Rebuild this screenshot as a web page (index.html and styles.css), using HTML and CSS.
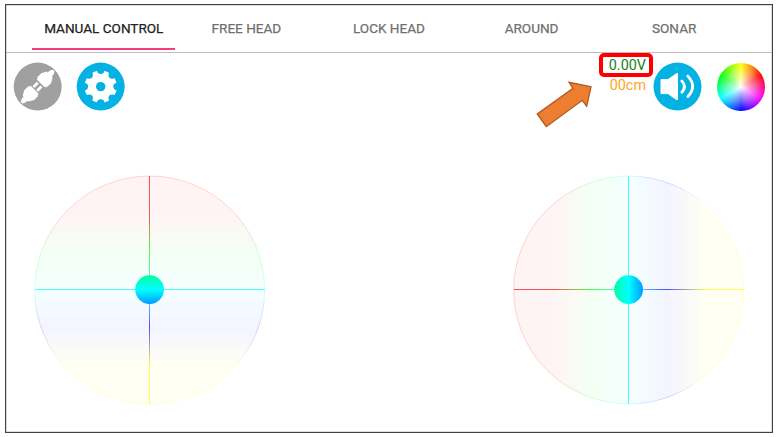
FILE: index.html
```html
<!DOCTYPE html>
<html lang="en">
<head>
<meta charset="utf-8">
<title>Robot control</title>
<link rel="stylesheet" href="styles.css">
</head>
<body>
<main class="screen">
  <nav class="tabs">
    <a class="tab active">MANUAL CONTROL</a>
    <a class="tab">FREE HEAD</a>
    <a class="tab">LOCK HEAD</a>
    <a class="tab">AROUND</a>
    <a class="tab">SONAR</a>
  </nav>
  <section class="toolbar">
    <div class="group">
      <svg class="icon" viewBox="0 0 48 48">
        <g transform="translate(-.3 -.4)">
        <circle cx="24" cy="24" r="24" fill="#9fa09f"/>
        <g transform="translate(24 24) rotate(-45)" fill="#fff">
          <path d="M4.4 -5.8H6V-7H12L17 -4.2V-3L20.5 -2.5L22.8 -1V1L20.5 2.5L17 3V4.2L12 7H6V5.8H4.4Z"/>
          <path d="M-4.4 -5.8H-6V-7H-12L-17 -4.2V-3L-20.5 -2.5L-22.8 -1V1L-20.5 2.5L-17 3V4.2L-12 7H-6V5.8H-4.4Z"/>
          <path d="M-3.3 -4H2.7V-1.2H-3.3ZM-3.3 1.2H2.7V4H-3.3Z"/>
        </g>
        </g>
      </svg>
      <svg class="icon" viewBox="0 0 48 48">
        <g transform="translate(-.3 -.4)">
        <circle cx="24" cy="24" r="24" fill="#03b1e3"/>
        <circle cx="24" cy="24" r="16.2" fill="#fff"/>
        <g fill="#03b1e3">
          <circle cx="24" cy="24" r="4.7"/>
          <circle cx="24" cy="7.7" r="3.7"/>
          <circle cx="35.5" cy="12.5" r="3.7"/>
          <circle cx="40.3" cy="24" r="3.7"/>
          <circle cx="35.5" cy="35.5" r="3.7"/>
          <circle cx="24" cy="40.3" r="3.7"/>
          <circle cx="12.5" cy="35.5" r="3.7"/>
          <circle cx="7.7" cy="24" r="3.7"/>
          <circle cx="12.5" cy="12.5" r="3.7"/>
        </g>
        </g>
      </svg>
    </div>
    <div class="group right">
      <div class="readings">
        <span class="voltage">0.00V</span>
        <span class="distance">00cm</span>
      </div>
      <svg class="icon" viewBox="0 0 48 48">
        <g transform="translate(-.5 -.4)">
        <circle cx="24" cy="24" r="24" fill="#03b1e3"/>
        <path d="M7.5 17H14.5L23 11H24V37H23L14.5 31H7.5Z" fill="#fff" stroke="#fff" stroke-width="1" stroke-linejoin="round"/>
        <path d="M28.3 18.3Q33.7 24 28.3 29.7M34.3 13.5Q44 23.6 34.3 34" fill="none" stroke="#fff" stroke-width="2.8" stroke-linecap="round"/>
        </g>
      </svg>
      <div class="wheel"></div>
    </div>
  </section>
  <section class="pads">
    <svg class="pad" viewBox="0 0 232 230">
      <defs>
        <linearGradient id="v" gradientUnits="userSpaceOnUse" x1="0" y1="1" x2="0" y2="229">
          <stop offset=".167" stop-color="#f00"/><stop offset=".333" stop-color="#0f0"/><stop offset=".5" stop-color="#0ff"/><stop offset=".667" stop-color="#00f"/><stop offset=".833" stop-color="#ff0"/>
        </linearGradient>
        <linearGradient id="knob-v" x1="0" y1="0" x2="0" y2="1">
          <stop stop-color="#00ffa0"/><stop offset=".5" stop-color="#0ff"/><stop offset="1" stop-color="#009cff"/>
        </linearGradient>
      </defs>
      <ellipse cx="115.7" cy="115" rx="115" ry="114" fill="url(#v)" fill-opacity=".045" stroke="url(#v)" stroke-opacity=".16"/>
      <path d="M115 1h1v228h-1zM1 114h230v1H1z" fill="url(#v)" fill-opacity=".68"/>
      <circle cx="115.6" cy="114.6" r="14.4" fill="url(#knob-v)"/>
    </svg>
    <svg class="pad" viewBox="0 0 232 230">
      <defs>
        <linearGradient id="h" gradientUnits="userSpaceOnUse" x1="1" y1="0" x2="231" y2="0">
          <stop offset=".167" stop-color="#f00"/><stop offset=".333" stop-color="#0f0"/><stop offset=".5" stop-color="#0ff"/><stop offset=".667" stop-color="#00f"/><stop offset=".833" stop-color="#ff0"/>
        </linearGradient>
        <linearGradient id="knob-h">
          <stop stop-color="#00ffa0"/><stop offset=".5" stop-color="#0ff"/><stop offset="1" stop-color="#009cff"/>
        </linearGradient>
      </defs>
      <ellipse cx="115.7" cy="115" rx="115" ry="114" fill="url(#h)" fill-opacity=".045" stroke="url(#h)" stroke-opacity=".16"/>
      <path d="M115 1h1v228h-1zM1 114h230v1H1z" fill="url(#h)" fill-opacity=".68"/>
      <circle cx="115.6" cy="114.6" r="14.4" fill="url(#knob-h)"/>
    </svg>
  </section>
  <svg class="arrow" viewBox="0 0 60 50">
    <path d="M5.3 36L14.3 48.7L50.3 22.3L54.7 28.3L59 8.7L37 4.3L41 10.4Z" transform="translate(0 -2)" fill="#ed7d31" stroke="#ae5a21" stroke-width="1.3"/>
  </svg>
  <div class="callout"></div>
</main>
</body>
</html>
```
FILE: styles.css
```css
body {
  margin: 0;
  padding: 4px 6px 4px 5px;
  background: #fff;
  font-family: Roboto, sans-serif;
}
.screen {
  position: relative;
  box-sizing: border-box;
  height: 429px;
  border: 1px solid #404040;
  box-shadow: inset 0 0 0 .5px #bbb;
}
.tabs {
  display: grid;
  grid-template-columns: repeat(5, 142.6px);
  height: 47px;
  padding-left: 26px;
  border-bottom: 1px solid #bdbdbd;
}
.tab {
  height: 43px;
  border-bottom: 2px solid transparent;
  color: #707070;
  font-size: 13.55px;
  font-weight: 400;
  -webkit-text-stroke: .25px currentColor;
  line-height: 46px;
  text-align: center;
  text-indent: 1px;
}
.tab.active {
  color: #222;
  border-color: #f73d7b;
}
.toolbar {
  display: flex;
  justify-content: space-between;
  padding: 10px 7px 0 8px;
}
.group {
  display: flex;
  gap: 15px;
}
.icon, .wheel {
  display: block;
  width: 48px;
  height: 48px;
  overflow: visible;
}
.wheel {
  position: relative;
  left: -.5px;
  top: -.4px;
  border-radius: 50%;
  background:
    radial-gradient(circle closest-side, #fff 0, rgba(255, 255, 255, .7) 25%, rgba(255, 255, 255, 0) 100%),
    conic-gradient(from 60deg, #f00, #f0f, #00f, #0ff, #0f0, #ff0, #f00);
}
.readings {
  display: flex;
  flex-direction: column;
  align-items: flex-end;
  margin-right: -7px;
  margin-top: -7px;
  font-size: 14.4px;
  line-height: 19.5px;
}
.voltage { color: #188018; }
.distance { color: #ffa51a; }
.pads {
  display: flex;
  justify-content: space-between;
  padding: 64px 27px 0 28px;
}
.pad {
  display: block;
  width: 232px;
  height: 230px;
}
.arrow {
  position: absolute;
  left: 526px;
  top: 75px;
  width: 60px;
  height: 50px;
}
.callout {
  position: absolute;
  left: 593px;
  top: 48px;
  box-sizing: border-box;
  width: 54px;
  height: 24px;
  border: 4px solid #f00;
  border-radius: 5px;
}
```
